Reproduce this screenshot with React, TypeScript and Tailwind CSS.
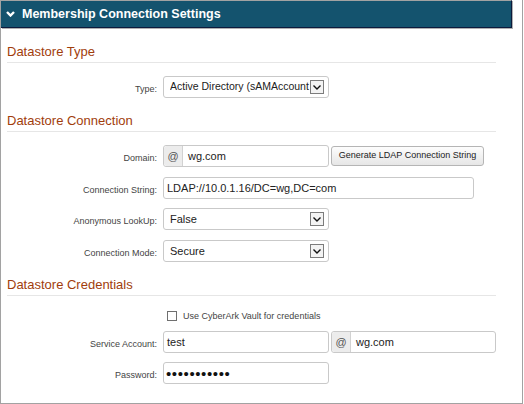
const font = "font-['Liberation_Sans',Arial,sans-serif]";

function Label({ text }: { text: string }) {
  return (
    <span className="w-[156px] shrink-0 pr-[6px] pt-[3px] text-right text-[9px] leading-[12px] text-[#444]">
      {text}
    </span>
  );
}

function Row({ label, className, children }: { label: string; className: string; children: React.ReactNode }) {
  return (
    <div className={`flex items-center ${className}`}>
      <Label text={label} />
      {children}
    </div>
  );
}

function TextBox({ value, width }: { value: string; width: string }) {
  return (
    <div
      className={`${width} flex h-[22px] items-center rounded-[3px] border border-[#c9c9c9] bg-white px-[3px] text-[11px] text-[#222]`}
    >
      {value}
    </div>
  );
}

function AtBox({ value, width }: { value: string; width: string }) {
  return (
    <div className={`${width} flex h-[22px] rounded-[3px] border border-[#c9c9c9] bg-white text-[11px] text-[#222]`}>
      <span className="flex w-[19px] items-center justify-center rounded-l-[3px] border-r border-[#d2d2d2] bg-[#ececec] text-[#555]">
        @
      </span>
      <span className="flex items-center pl-[5px]">{value}</span>
    </div>
  );
}

function Select({ value, size = "text-[11px]" }: { value: string; size?: string }) {
  return (
    <div
      className={`flex h-[22px] w-[166px] items-center rounded-[3px] border border-[#c9c9c9] bg-white pl-[6px] pr-[4px] text-[#222] ${size}`}
    >
      <span className="min-w-0 flex-1 overflow-hidden whitespace-nowrap">{value}</span>
      <span className="flex h-[14px] w-[14px] shrink-0 items-center justify-center border border-[#7c7c7c] bg-[#f3f3f3]">
        <svg width="8" height="5" viewBox="0 0 8 5">
          <polyline points="0.5,0.5 4,4 7.5,0.5" fill="none" stroke="#111" strokeWidth="1.4" />
        </svg>
      </span>
    </div>
  );
}

function Heading({ text, className }: { text: string; className: string }) {
  return (
    <div className={`w-[489px] border-b border-[#e6e6e6] text-[13px] leading-[20px] text-[#a13d0c] ${className}`}>
      {text}
    </div>
  );
}

export default function App() {
  return (
    <div className={`${font} h-[404px] w-[523px] border-x border-b border-[#a2a2a2] bg-white`}>
      <div className="flex h-[28px] w-[511px] items-center border-t border-b border-r border-t-[#a2a2a2] border-b-[#0c1b3d] border-r-[#0c1b3d] bg-[#14536e] shadow-[1px_1px_0_#b0b0b0]">
        <svg className="ml-[5px] mr-[7px]" width="9" height="6" viewBox="0 0 9 6">
          <polyline points="1,1 4.5,4.5 8,1" fill="none" stroke="#fff" strokeWidth="2.4" />
        </svg>
        <span className="text-[12.5px] font-bold text-white">Membership Connection Settings</span>
      </div>

      <div className="pl-[6px]">
        <Heading text="Datastore Type" className="mt-[14px]" />
        <Row label="Type:" className="mt-[13px]">
          <Select value="Active Directory (sAMAccount" size="text-[10.5px]" />
        </Row>

        <Heading text="Datastore Connection" className="mt-[13px]" />
        <Row label="Domain:" className="mt-[13px]">
          <AtBox value="wg.com" width="w-[166px]" />
          <button className="ml-[2px] h-[20px] w-[153px] rounded-[3px] border border-[#b5b5b5] bg-gradient-to-b from-[#fdfdfd] to-[#e6e6e6] text-[9px] text-[#222]">
            Generate LDAP Connection String
          </button>
        </Row>
        <Row label="Connection String:" className="mt-[10px]">
          <TextBox value="LDAP://10.0.1.16/DC=wg,DC=com" width="w-[311px]" />
        </Row>
        <Row label="Anonymous LookUp:" className="mt-[9px]">
          <Select value="False" />
        </Row>
        <Row label="Connection Mode:" className="mt-[10px]">
          <Select value="Secure" />
        </Row>

        <Heading text="Datastore Credentials" className="mt-[13px]" />
        <div className="mt-[15px] flex h-[10px] items-center pl-[160px]">
          <span className="h-[10px] w-[10px] border border-[#6f6f6f] bg-white" />
          <span className="ml-[6px] text-[9px] leading-[10px] text-[#444]">Use CyberArk Vault for credentials</span>
        </div>
        <Row label="Service Account:" className="mt-[10px]">
          <TextBox value="test" width="w-[166px]" />
          <div className="ml-[2px]">
            <AtBox value="wg.com" width="w-[165px]" />
          </div>
        </Row>
        <Row label="Password:" className="mt-[9px]">
          <div className="flex h-[22px] w-[166px] items-center rounded-[3px] border border-[#c9c9c9] bg-white px-[2px] text-[15px] leading-none tracking-[0.6px] text-[#111]">
            •••••••••••
          </div>
        </Row>
      </div>
    </div>
  );
}
